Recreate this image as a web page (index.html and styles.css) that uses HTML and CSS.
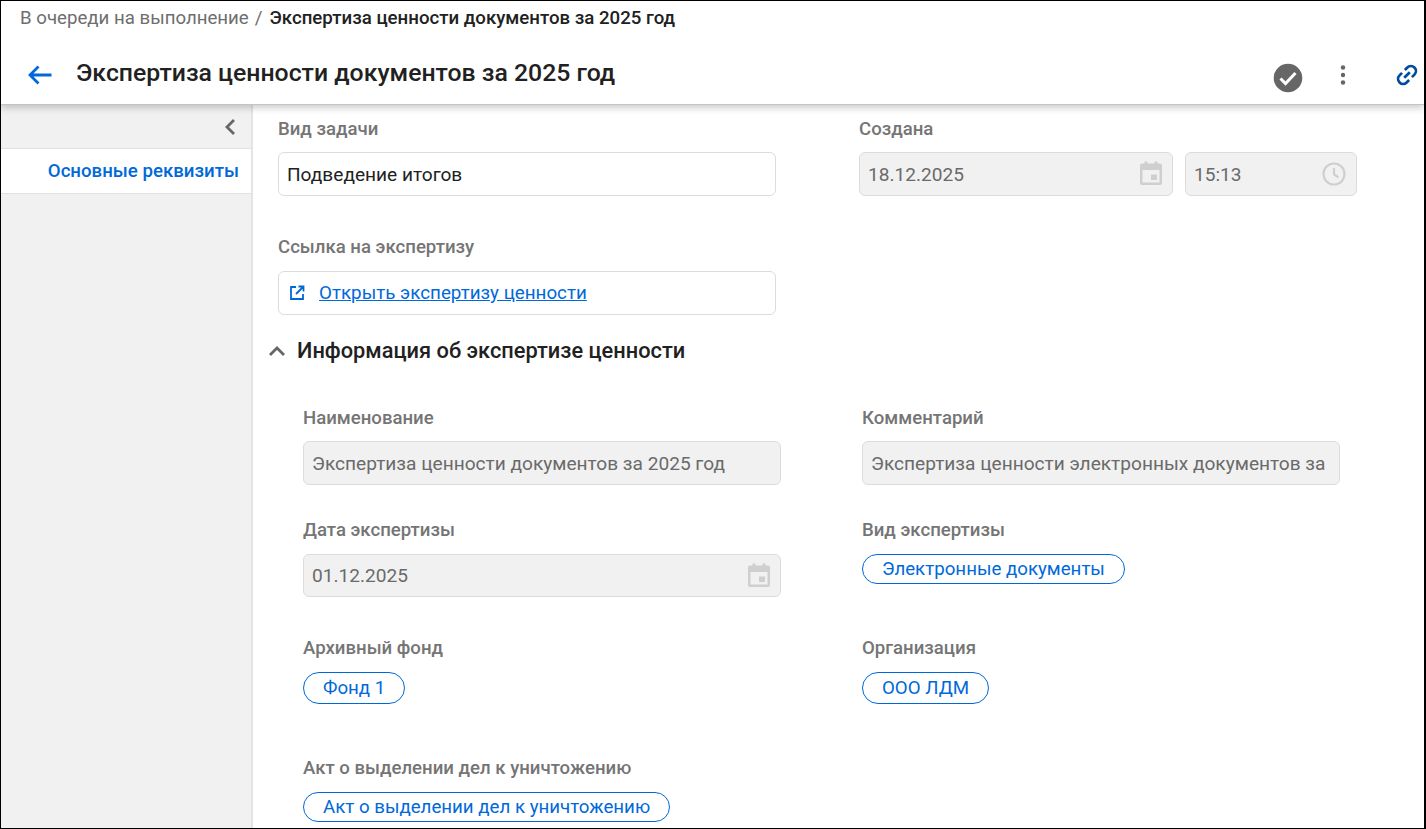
FILE: index.html
```html
<!DOCTYPE html>
<html lang="ru">
<head>
<meta charset="utf-8">
<title>Экспертиза ценности документов за 2025 год</title>
<link rel="stylesheet" href="styles.css">
</head>
<body>
<div class="frame">
  <header class="header">
    <div class="crumbs"><span class="crumb-link">В очереди на выполнение</span><span class="crumb-sep">/</span><span class="crumb-current">Экспертиза ценности документов за 2025 год</span></div>
    <div class="titlebar">
      <svg class="back" width="26" height="22" viewBox="0 0 26 22"><path d="M24.500 11H3M11.500 2.500 3 11l8.500 8.500" fill="none" stroke="#0069d9" stroke-width="2.800"/></svg>
      <h1 class="title">Экспертиза ценности документов за 2025 год</h1>
      <div class="actions">
        <svg class="act-check" width="30" height="30" viewBox="0 0 30 30"><circle cx="15" cy="15" r="14.300" fill="#666"/><path d="M7.500 15.500l5 5 10-10.500" fill="none" stroke="#fff" stroke-width="3"/></svg>
        <svg class="act-more" width="6" height="22" viewBox="0 0 6 22"><circle cx="3" cy="3.500" r="2.200" fill="#666"/><circle cx="3" cy="11" r="2.200" fill="#666"/><circle cx="3" cy="18.500" r="2.200" fill="#666"/></svg>
        <svg class="act-link" width="24" height="24" viewBox="0 0 24 24"><g fill="none" stroke="#004a9f" stroke-width="2.700" transform="rotate(-45 12 12)"><path d="M10 7H6.500a5 5 0 0 0 0 10H10"/><path d="M14 7h3.500a5 5 0 0 1 0 10H14"/><path d="M8 12h8"/></g></svg>
      </div>
    </div>
  </header>
  <div class="body">
    <aside class="side">
      <div class="side-toggle"><svg width="12" height="18" viewBox="0 0 12 18"><path d="M10 2 3 9l7 7" fill="none" stroke="#666" stroke-width="2.800"/></svg></div>
      <div class="side-item">Основные реквизиты</div>
    </aside>
    <main class="main">
      <div class="grid-top">
        <div class="field">
          <div class="label">Вид задачи</div>
          <div class="input">Подведение итогов</div>
        </div>
        <div class="field">
          <div class="label">Создана</div>
          <div class="datetime">
            <div class="input disabled date">18.12.2025
              <svg class="cal" width="24" height="26" viewBox="0 1 24 26"><path d="M1 5.500A2 2 0 0 1 3 3.500H5.500V1.500H8.500V3.500H15.500V1.500H18.500V3.500H21A2 2 0 0 1 23 5.500V23A2 2 0 0 1 21 25H3A2 2 0 0 1 1 23ZM3.500 10V22.500H20.500V10ZM12 14.500H18V20H12Z" fill="#cfcfcf" fill-rule="evenodd"/></svg>
            </div>
            <div class="input disabled time">15:13
              <svg class="clock" width="24" height="24" viewBox="0 0 24 24"><circle cx="12" cy="12" r="10.500" fill="none" stroke="#cfcfcf" stroke-width="2.200"/><path d="M12 6v6.500l4.500 2.700" fill="none" stroke="#cfcfcf" stroke-width="2.200"/></svg>
            </div>
          </div>
        </div>
        <div class="field field-link">
          <div class="label label-low">Ссылка на экспертизу</div>
          <div class="input linkbox">
            <svg width="16" height="16" viewBox="0 0 16 16"><path d="M7 2H2v12h12V9M9.500 1.500h5v5M14 2 7 9" fill="none" stroke="#0069d9" stroke-width="1.800"/></svg>
            <a class="link" href="#">Открыть экспертизу ценности</a>
          </div>
        </div>
      </div>
      <div class="section-head">
        <svg width="18" height="12" viewBox="0 0 18 12"><path d="M2 10l7-7 7 7" fill="none" stroke="#666" stroke-width="2.800"/></svg>
        <h2 class="section-title">Информация об экспертизе ценности</h2>
      </div>
      <div class="grid-info">
        <div class="field">
          <div class="label">Наименование</div>
          <div class="input disabled wide">Экспертиза ценности документов за 2025 год</div>
        </div>
        <div class="field">
          <div class="label">Комментарий</div>
          <div class="input disabled wide clip">Экспертиза ценности электронных документов за</div>
        </div>
        <div class="field row-date">
          <div class="label label-low">Дата экспертизы</div>
          <div class="input disabled date-wide">01.12.2025
            <svg class="cal" width="24" height="26" viewBox="0 1 24 26"><path d="M1 5.500A2 2 0 0 1 3 3.500H5.500V1.500H8.500V3.500H15.500V1.500H18.500V3.500H21A2 2 0 0 1 23 5.500V23A2 2 0 0 1 21 25H3A2 2 0 0 1 1 23ZM3.500 10V22.500H20.500V10ZM12 14.500H18V20H12Z" fill="#cfcfcf" fill-rule="evenodd"/></svg>
          </div>
        </div>
        <div class="field row-date">
          <div class="label label-low">Вид экспертизы</div>
          <div class="chips"><span class="chip">Электронные документы</span></div>
        </div>
        <div class="field row-fund">
          <div class="label label-low">Архивный фонд</div>
          <div class="chips"><span class="chip chip-tall">Фонд 1</span></div>
        </div>
        <div class="field row-fund">
          <div class="label label-low">Организация</div>
          <div class="chips"><span class="chip chip-tall">ООО ЛДМ</span></div>
        </div>
        <div class="field row-act">
          <div class="label label-low">Акт о выделении дел к уничтожению</div>
          <div class="chips"><span class="chip">Акт о выделении дел к уничтожению</span></div>
        </div>
      </div>
    </main>
  </div>
</div>
</body>
</html>
```
FILE: styles.css
```css
* { box-sizing: border-box; }
html, body { margin: 0; height: 100%; overflow: hidden; }
body { font-family: Roboto, "Noto Sans", sans-serif; color: #212121; background: #fff; }
.frame { height: 829px; width: 1426px; border: 1px solid #000; border-right-width: 2px; display: flex; flex-direction: column; overflow: hidden; }
.header { height: 104px; flex: none; background: #fff; border-bottom: 1px solid #c4c4c4; box-shadow: 0 3px 7px rgba(0,0,0,.2); position: relative; z-index: 2; padding: 7px 0 0 18px; }
.crumbs { display: flex; align-items: center; height: 20px; font-size: 18.670px; line-height: 20px; white-space: nowrap; padding-left: 1px; }
.crumb-link { color: #6e6e6e; }
.crumb-sep { color: #6e6e6e; margin: 0 7px 0 6px; }
.crumb-current { color: #212121; font-weight: 500; }
.titlebar { display: flex; align-items: center; margin-top: 25px; height: 40px; padding-left: 8px; }
.back { flex: none; margin: 4px 23px 0 0; }
.title { margin: 0; font-size: 24.800px; line-height: 32px; font-weight: 500; color: #212121; white-space: nowrap; }
.actions { margin-left: auto; align-self: flex-start; display: flex; align-items: flex-start; padding: 10px 5px 0 0; }
.act-check { margin-right: 37px; }
.act-more { margin: 1px 49px 0 0; }
.body { flex: 1; display: flex; min-height: 0; }
.side { width: 252px; flex: none; background: #f1f1f1; border-right: 2px solid #e4e4e4; }
.side-toggle { height: 44px; display: flex; align-items: center; justify-content: flex-end; padding-right: 15px; border-bottom: 1px solid #e0e0e0; }
.side-item { height: 45px; background: #fff; border-bottom: 1px solid #e0e0e0; display: flex; align-items: center; justify-content: flex-end; padding-right: 12px; color: #0069d9; font-size: 18.670px; font-weight: 500; }
.main { flex: 1; padding: 14px 0 0 25px; min-width: 0; }
.grid-top { display: grid; grid-template-columns: 498px 498px; column-gap: 83px; row-gap: 41px; }
.field { min-width: 0; }
.label { font-size: 18.600px; line-height: 20px; font-weight: 500; color: #757575; margin-bottom: 13px; white-space: nowrap; }
.label-low { margin-bottom: 14px; }
.input { height: 44px; border: 1px solid #dcdcdc; border-radius: 6px; background: #fff; display: flex; align-items: center; padding: 0 8px; font-size: 19.100px; color: #212121; white-space: nowrap; }
.input.disabled { background: #f1f1f1; color: #6a6a6a; }
.datetime { display: flex; gap: 12px; }
.date { width: 314px; justify-content: space-between; padding-right: 9px; }
.time { width: 172px; justify-content: space-between; padding-right: 10px; }
.linkbox { gap: 14px; padding-left: 10px; }
.link { color: #0069d9; font-size: 18.800px; text-decoration: underline; }
.section-head { display: flex; align-items: center; gap: 11px; margin: 20px 0 0 -10px; height: 32px; }
.section-title { margin: 0; font-size: 21.800px; line-height: 32px; font-weight: 500; color: #212121; white-space: nowrap; }
.grid-info { display: grid; grid-template-columns: 478px 478px; column-gap: 81px; margin: 41px 0 0 25px; }
.row-date { margin-top: 35px; }
.row-fund { margin-top: 41px; }
.row-act { margin-top: 54px; }
.wide { width: 478px; }
.clip { overflow: hidden; }
.date-wide { width: 478px; height: 43px; justify-content: space-between; padding-right: 9px; }
.chips { display: flex; }
.chip { border: 1px solid #0069d9; border-radius: 16px; height: 30px; padding: 0 19px; display: inline-flex; align-items: center; font-size: 18.700px; color: #0069d9; white-space: nowrap; }
.chip-tall { height: 32px; }
```
